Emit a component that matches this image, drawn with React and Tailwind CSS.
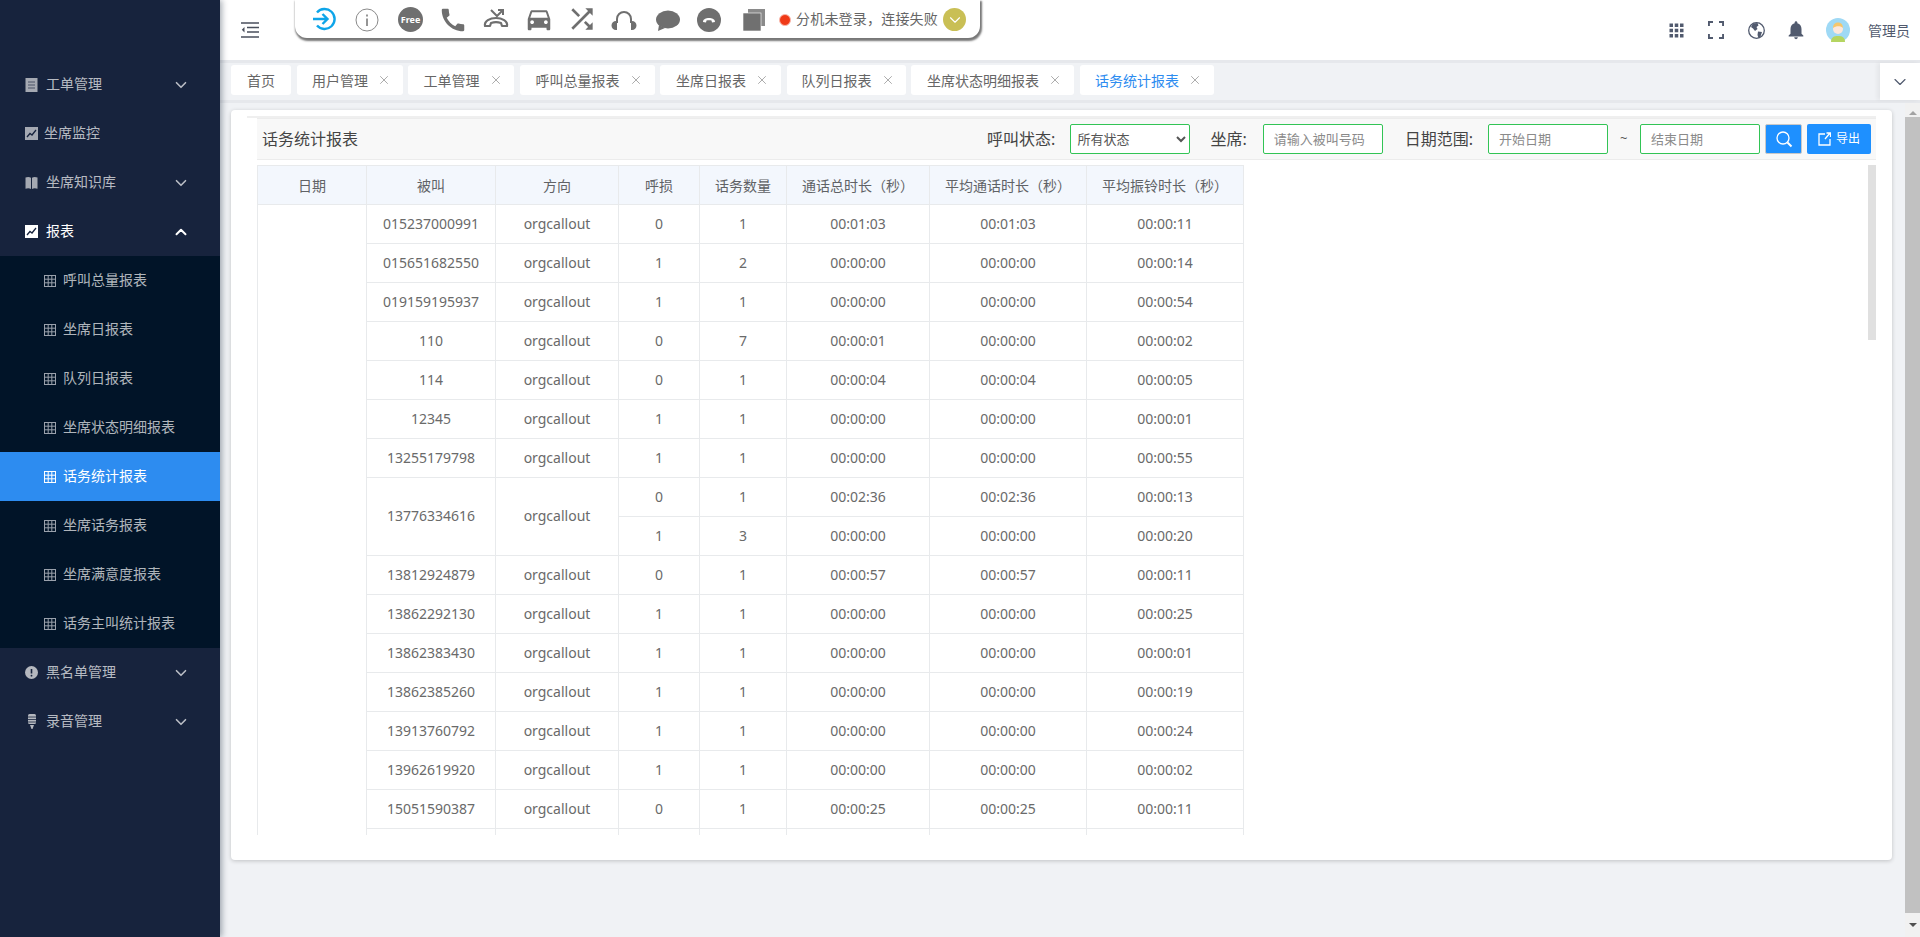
import { ChevronDown, ChevronUp, X } from "lucide-react";
import {
  MdCall,
  MdDirectionsCar,
  MdShuffle,
  MdApps,
  MdNotifications,
} from "react-icons/md";

const rows = [
  ["015237000991", "0", "1", "00:01:03", "00:01:03", "00:00:11"],
  ["015651682550", "1", "2", "00:00:00", "00:00:00", "00:00:14"],
  ["019159195937", "1", "1", "00:00:00", "00:00:00", "00:00:54"],
  ["110", "0", "7", "00:00:01", "00:00:00", "00:00:02"],
  ["114", "0", "1", "00:00:04", "00:00:04", "00:00:05"],
  ["12345", "1", "1", "00:00:00", "00:00:00", "00:00:01"],
  ["13255179798", "1", "1", "00:00:00", "00:00:00", "00:00:55"],
  ["13776334616", "0", "1", "00:02:36", "00:02:36", "00:00:13", 2],
  [null, "1", "3", "00:00:00", "00:00:00", "00:00:20"],
  ["13812924879", "0", "1", "00:00:57", "00:00:57", "00:00:11"],
  ["13862292130", "1", "1", "00:00:00", "00:00:00", "00:00:25"],
  ["13862383430", "1", "1", "00:00:00", "00:00:00", "00:00:01"],
  ["13862385260", "1", "1", "00:00:00", "00:00:00", "00:00:19"],
  ["13913760792", "1", "1", "00:00:00", "00:00:00", "00:00:24"],
  ["13962619920", "1", "1", "00:00:00", "00:00:00", "00:00:02"],
  ["15051590387", "0", "1", "00:00:25", "00:00:25", "00:00:11"],
  ["", "", "", "", "", ""],
];

const tabs = [
  { name: "首页", w: "w-[60px]", plain: true },
  { name: "用户管理", w: "w-[106px]" },
  { name: "工单管理", w: "w-[106px]" },
  { name: "呼叫总量报表", w: "w-[135px]" },
  { name: "坐席日报表", w: "w-[121px]" },
  { name: "队列日报表", w: "w-[119px]" },
  { name: "坐席状态明细报表", w: "w-[163px]" },
  { name: "话务统计报表", w: "w-[134px]", active: true },
];

const subMenu = ["呼叫总量报表", "坐席日报表", "队列日报表", "坐席状态明细报表", "话务统计报表", "坐席话务报表", "坐席满意度报表", "话务主叫统计报表"];

const th = "border border-[#e8eaec] bg-[#f3f7fd] font-normal text-[14px] text-[#606266] h-[39px] p-0";
const td = "border border-[#e8eaec] text-[14px] text-[#6a6a6a] h-[39px] p-0 pb-[2px] text-center";
const field = "h-[30px] w-[120px] border border-[#32c455] rounded-[2px] bg-white text-[13px] outline-none";

function DocIcon() {
  return (
    <svg width="13" height="14" viewBox="0 0 13 14" fill="none">
      <rect x="0.5" y="0" width="12" height="14" fill="#a5a9b2" />
      <path d="M3 4h7M3 7h7M3 10h7" stroke="#4a5266" strokeWidth="1" />
    </svg>
  );
}

function ChartIcon({ color }) {
  return (
    <svg width="13" height="13" viewBox="0 0 13 13">
      <rect width="13" height="13" fill={color} />
      <path d="M2 10l3-3.5 2 1.5 4-5" stroke="#17233d" strokeWidth="1.3" fill="none" />
    </svg>
  );
}

function BookIcon() {
  return (
    <svg width="13" height="13" viewBox="0 0 13 13">
      <path d="M0.5 1.5C2.5 0.8 4.5 0.8 6 1.8V13C4.5 12 2.5 12 0.5 12.7zM12.5 1.5C10.5 0.8 8.5 0.8 7 1.8V13C8.5 12 10.5 12 12.5 12.7z" fill="#a5a9b2" />
    </svg>
  );
}

function AlertIcon() {
  return (
    <svg width="13" height="13" viewBox="0 0 13 13">
      <circle cx="6.5" cy="6.5" r="6.5" fill="#b5b8bf" />
      <path d="M6.5 3v4.5" stroke="#17233d" strokeWidth="1.6" />
      <circle cx="6.5" cy="9.7" r="0.9" fill="#17233d" />
    </svg>
  );
}

function MicIcon() {
  return (
    <svg width="10" height="15" viewBox="0 0 10 15">
      <rect x="1" y="0" width="8" height="10" rx="1.5" fill="#b5b8bf" />
      <path d="M1 3h8M1 5.5h8M1 8h8" stroke="#17233d" strokeWidth="0.8" />
      <path d="M3 11h4l-1.5 4h-1z" fill="#b5b8bf" />
    </svg>
  );
}

function GridIcon({ color = "#9aa1ac" }) {
  return (
    <svg width="12" height="12" viewBox="0 0 12 12" fill="none" stroke={color} strokeWidth="1">
      <rect x="0.5" y="0.5" width="11" height="11" />
      <path d="M4.2 0.5v11M7.8 0.5v11M0.5 4.2h11M0.5 7.8h11" />
    </svg>
  );
}

function MenuItem({ icon, label, pad, arrow, active }) {
  return (
    <div className={`h-[49px] flex items-center pl-[25px] pr-[30px] text-[14px] ${active ? "text-white" : "text-white/70"}`}>
      <span className="w-[13px] flex justify-center">{icon}</span>
      <span className={`${pad} pb-[2px]`}>{label}</span>
      {arrow === "down" && <ChevronDown size={18} strokeWidth={2.2} className="ml-auto" />}
      {arrow === "up" && <ChevronUp size={18} strokeWidth={2.6} className="ml-auto" />}
    </div>
  );
}

function Sidebar() {
  return (
    <aside className="w-[220px] shrink-0 bg-[#17233d] pt-[60px] shadow-[2px_0_6px_rgba(0,21,41,0.35)] z-10">
      <MenuItem icon={<DocIcon />} label="工单管理" pad="ml-[8px]" arrow="down" />
      <MenuItem icon={<ChartIcon color="#a5a9b2" />} label="坐席监控" pad="ml-[6px]" />
      <MenuItem icon={<BookIcon />} label="坐席知识库" pad="ml-[8px]" arrow="down" />
      <MenuItem icon={<ChartIcon color="#fff" />} label="报表" pad="ml-[8px]" arrow="up" active />
      <div className="bg-[#011428]">
        {subMenu.map((name) => {
          const on = name === "话务统计报表";
          return (
            <div key={name} className={`h-[49px] flex items-center pl-[44px] text-[14px] ${on ? "bg-[#2d8cf0] text-white" : "text-white/70"}`}>
              <GridIcon color={on ? "#fff" : "#9aa1ac"} />
              <span className="ml-[7px] pb-[2px]">{name}</span>
            </div>
          );
        })}
      </div>
      <MenuItem icon={<AlertIcon />} label="黑名单管理" pad="ml-[8px]" arrow="down" />
      <MenuItem icon={<MicIcon />} label="录音管理" pad="ml-[8px]" arrow="down" />
    </aside>
  );
}

function Toolbar() {
  return (
    <div className="absolute left-[75px] top-0 w-[685px] h-[38px] bg-white rounded-b-[12px] shadow-[1px_2px_2px_1px_#777] flex items-center text-[#6f6f6f]">
      <span className="absolute left-[17px] top-[7px]">
        <svg width="24" height="24" viewBox="0 0 24 24" fill="none" stroke="#0ea5e9" strokeWidth="2.4">
          <path d="M5 5.5A10 10 0 1 1 5 18.5" />
          <path d="M1 12h14M10.5 7l5 5-5 5" />
        </svg>
      </span>
      <span className="absolute left-[60px] top-[8px]">
        <svg width="24" height="24" viewBox="0 0 24 24" fill="none" stroke="#8a8a8a" strokeWidth="1">
          <circle cx="12" cy="12" r="11" />
          <path d="M12 10.5v7.5M12 6.5v2" strokeWidth="1.8" />
        </svg>
      </span>
      <span className="absolute left-[103px] top-[7px] w-[25px] h-[25px] rounded-full bg-[#6f6f6f] text-white text-[9px] font-bold flex items-center justify-center">Free</span>
      <MdCall size={30} className="absolute left-[143px] top-[5px] -scale-x-100 rotate-90" />
      <span className="absolute left-[188px] top-[8px]">
        <svg width="26" height="22" viewBox="0 0 26 22" fill="none">
          <path d="M2 18c-1-5 5-8 11-8s12 3 11 8h-5l-1-3c-3-1-7-1-10 0l-1 3z" stroke="#6f6f6f" strokeWidth="2.2" strokeLinejoin="round" />
          <path d="M8 2l6 6 5-5M15 2h5v5" stroke="#6f6f6f" strokeWidth="2" />
        </svg>
      </span>
      <MdDirectionsCar size={30} className="absolute left-[229px] top-[4px]" />
      <MdShuffle size={32} className="absolute left-[271px] top-[3px]" />
      <span className="absolute left-[316px] top-[9px]">
        <svg width="26" height="22" viewBox="0 0 26 22" fill="none">
          <path d="M6 14V10a7 7 0 0 1 14 0v4" stroke="#6f6f6f" strokeWidth="2" />
          <path d="M6 12v9H5a4.500 4.500 0 0 1 0-9zM20 12v9h1a4.500 4.500 0 0 0 0-9z" fill="#6f6f6f" />
        </svg>
      </span>
      <span className="absolute left-[361px] top-[10px]">
        <svg width="24" height="21" viewBox="0 0 24 21">
          <ellipse cx="12" cy="9.500" rx="12" ry="9" fill="#6f6f6f" />
          <path d="M3 15l-1 6 7-3z" fill="#6f6f6f" />
        </svg>
      </span>
      <span className="absolute left-[402px] top-[8px]">
        <svg width="24" height="24" viewBox="0 0 24 24">
          <circle cx="12" cy="12" r="12" fill="#6f6f6f" />
          <path d="M6 14c0-3 3-4 6-4s6 1 6 4l-3 .5-.5-2c-1.500-.4-3.500-.4-5 0l-.5 2z" fill="#fff" />
        </svg>
      </span>
      <span className="absolute left-[448px] top-[9px]">
        <svg width="22" height="22" viewBox="0 0 22 22">
          <rect x="5" y="0" width="17" height="17" fill="#8a8a8a" />
          <rect x="0" y="4" width="18" height="18" fill="#707070" stroke="#fff" strokeWidth="0.6" />
        </svg>
      </span>
      <span className="absolute left-[484px] top-[14px] w-[12px] h-[12px] rounded-full bg-[#f03a17] border-[1.5px] border-[#f9b8ac]" />
      <span className="absolute left-[501px] top-[8px] text-[14px] leading-[22px] tracking-[0.2px] text-[#666] whitespace-nowrap">分机未登录，连接失败</span>
      <span className="absolute left-[648px] top-[8px] w-[23px] h-[23px] rounded-full bg-[#c9bf55] flex items-center justify-center text-white">
        <ChevronDown size={18} strokeWidth={1.5} />
      </span>
    </div>
  );
}

function Header() {
  return (
    <header className="relative h-[60px] bg-white flex items-center shrink-0">
      <span className="ml-[21px]">
        <svg width="18" height="16" viewBox="0 0 18 16" fill="none" stroke="#4a4f5c" strokeWidth="1.6">
          <path d="M0 1h18M6 5.500h12M6 10h12M0 15h18" />
          <path d="M3.500 5L0.8 7.700l2.700 2.700z" fill="#4a4f5c" stroke="none" />
        </svg>
      </span>
      <Toolbar />
      <div className="ml-auto flex items-center text-[#515a6e]">
        <span className="w-[40px] flex justify-center"><MdApps size={21} /></span>
        <span className="w-[40px] flex justify-center">
          <svg width="16" height="18" viewBox="0 0 16 18" fill="none" stroke="#515a6e" strokeWidth="2">
            <path d="M0.900 5V1H5M11 1h4.100v4M15.100 13v4H11M5 17H0.900v-4" />
          </svg>
        </span>
        <span className="w-[40px] flex justify-center">
          <svg width="17" height="19" viewBox="0 0 17 19">
            <circle cx="8.500" cy="9.500" r="7.800" fill="#fff" stroke="#515a6e" strokeWidth="1.300" />
            <path d="M5 2.500l4.500-.5 1 2.500-2 1.500 1 2-2.500 2-2-2.500-2-1.500zM10 10.500l4 .5-1.500 4.500-2 1.500-1-3z" fill="#515a6e" />
          </svg>
        </span>
        <span className="w-[40px] flex justify-center"><MdNotifications size={22} /></span>
        <span className="ml-[10px]">
          <svg width="24" height="24" viewBox="0 0 24 24" className="block">
            <circle cx="12" cy="12" r="12" fill="#9fd9f5" />
            <path d="M5 24c0-5 3-6 7-6s7 1 7 6z" fill="#b5d561" />
            <circle cx="12" cy="11" r="5" fill="#fde7dc" />
            <path d="M7 10c0-4 2.500-5.500 5-5.500s5 1.500 5 5.500c-2-2.500-7-2.500-10 0z" fill="#f6c66c" />
          </svg>
        </span>
        <span className="ml-[18px] mr-[10px] text-[14px] text-[#515a6e]">管理员</span>
      </div>
    </header>
  );
}

function Tabs() {
  return (
    <div className="h-[43px] shrink-0 border-y-[3px] border-[#e6e8ec] bg-[#f0f2f5] flex">
      <div className="flex-1 flex items-start gap-[5.5px] pl-[11px] pt-[2px]">
        {tabs.map((t) => (
          <div key={t.name} className={`${t.w} h-[30px] shrink-0 bg-white rounded-[3px] flex items-center justify-center text-[14px] ${t.plain ? "" : "pl-[4px]"} ${t.active ? "text-[#2d8cf0]" : "text-[#666]"}`}>
            {t.name}
            {!t.plain && <X size={14} strokeWidth={1.2} className="ml-[9px] text-[#888]" />}
          </div>
        ))}
      </div>
      <div className="w-[40px] bg-white flex items-center justify-center text-[#515a6e] shadow-[-3px_0_4px_rgba(0,0,0,0.05)]">
        <ChevronDown size={20} strokeWidth={1.4} />
      </div>
    </div>
  );
}

function Filters() {
  return (
    <div className="ml-[10px] h-[42px] border-y border-[#ececec] bg-[#f8f8f8] flex items-center justify-between pl-[5px] pr-[5px]">
      <span className="text-[16px] text-[#444]">话务统计报表</span>
      <div className="flex items-center">
        <span className="text-[16px] text-[#444] whitespace-nowrap">呼叫状态:</span>
        <select className={`${field} ml-[15px] pl-[2px] text-[#555]`} defaultValue="所有状态">
          <option>所有状态</option>
        </select>
        <span className="ml-[20px] text-[16px] text-[#444] whitespace-nowrap">坐席:</span>
        <input className={`${field} ml-[16px] px-[10px] placeholder:text-[#8a8a8a]`} placeholder="请输入被叫号码" />
        <span className="ml-[22px] text-[16px] text-[#444] whitespace-nowrap">日期范围:</span>
        <input className={`${field} ml-[15px] px-[10px] placeholder:text-[#8a8a8a]`} placeholder="开始日期" />
        <span className="mx-[12px] w-[8px] text-[13px] text-[#555]">~</span>
        <input className={`${field} px-[10px] placeholder:text-[#8a8a8a]`} placeholder="结束日期" />
        <button className="ml-[5px] w-[37px] h-[30px] bg-[#1e90ff] border border-[#c8c8c8] rounded-[2px] flex items-center justify-center">
          <svg width="18" height="18" viewBox="0 0 18 18" fill="none" stroke="#fff" strokeWidth="1.300">
            <circle cx="8" cy="8" r="6" />
            <path d="M12.500 12.500l4 4" strokeWidth="2" />
          </svg>
        </button>
        <button className="ml-[5px] w-[64px] h-[30px] bg-[#1e90ff] rounded-[2px] flex items-center justify-center text-white text-[12px]">
          <svg width="13" height="14" viewBox="0 0 13 14" fill="none" stroke="#fff" strokeWidth="1.300" className="mr-[5px]">
            <path d="M7 2H1v11h11V7M7 7l5-6M8.500 1H12.500V5" />
          </svg>
          导出
        </button>
      </div>
    </div>
  );
}

function ReportTable() {
  return (
    <div className="relative ml-[10px] mt-[5px] h-[670px] overflow-hidden">
      <table className="table-fixed border-collapse w-[986px] text-center">
        <colgroup>
          <col className="w-[109px]" />
          <col className="w-[129px]" />
          <col className="w-[123px]" />
          <col className="w-[81px]" />
          <col className="w-[87px]" />
          <col className="w-[143px]" />
          <col className="w-[157px]" />
          <col className="w-[157px]" />
        </colgroup>
        <thead>
          <tr>
            {["日期", "被叫", "方向", "呼损", "话务数量", "通话总时长（秒）", "平均通话时长（秒）", "平均振铃时长（秒）"].map((h) => (
              <th key={h} className={th}>{h}</th>
            ))}
          </tr>
        </thead>
        <tbody>
          {rows.map((r, i) => (
            <tr key={i}>
              {i === 0 && <td className={td} rowSpan={rows.length}></td>}
              {r[0] !== null && <td className={td} rowSpan={r[6] || 1}>{r[0]}</td>}
              {r[0] !== null && <td className={td} rowSpan={r[6] || 1}>{r[0] === "" ? "" : "orgcallout"}</td>}
              <td className={td}>{r[1]}</td>
              <td className={td}>{r[2]}</td>
              <td className={td}>{r[3]}</td>
              <td className={td}>{r[4]}</td>
              <td className={td}>{r[5]}</td>
            </tr>
          ))}
        </tbody>
      </table>
      {/* inner scroll thumb */}
      <div className="absolute right-0 top-0 w-[8px] h-[175px] bg-[#e0e0e0]" />
    </div>
  );
}

function PageScrollbar() {
  return (
    <div className="w-[15px] shrink-0 bg-[#f1f1f1] flex flex-col items-center">
      <div className="h-[14px] w-full flex items-center justify-center pt-[6px]">
        <span className="border-x-[4px] border-x-transparent border-b-[4px] border-b-[#a3a3a3]" />
      </div>
      <div className="w-full h-[796px] bg-[#c1c1c1]" />
      <div className="flex-1 w-full flex items-center justify-center">
        <span className="border-x-[4px] border-x-transparent border-t-[4px] border-t-[#505050]" />
      </div>
    </div>
  );
}

export default function App() {
  return (
    <div className="flex h-[937px] w-[1920px] overflow-hidden bg-[#f0f2f5] font-['Noto_Sans','Noto_Sans_CJK_SC',sans-serif]">
      <Sidebar />
      <div className="flex-1 flex flex-col min-w-0">
        <Header />
        <Tabs />
        <div className="flex-1 flex min-h-0">
          <main className="flex-1 pl-[11px] pr-[13px] pt-[7px]">
            <div className="h-[750px] bg-white rounded-[4px] shadow-[0_1px_4px_rgba(0,0,0,0.2)] pl-[16px] pr-[16px] pt-[6px]">
              <div className="border-t-2 border-[#efefef]">
                <Filters />
                <ReportTable />
              </div>
            </div>
          </main>
          <PageScrollbar />
        </div>
      </div>
    </div>
  );
}
